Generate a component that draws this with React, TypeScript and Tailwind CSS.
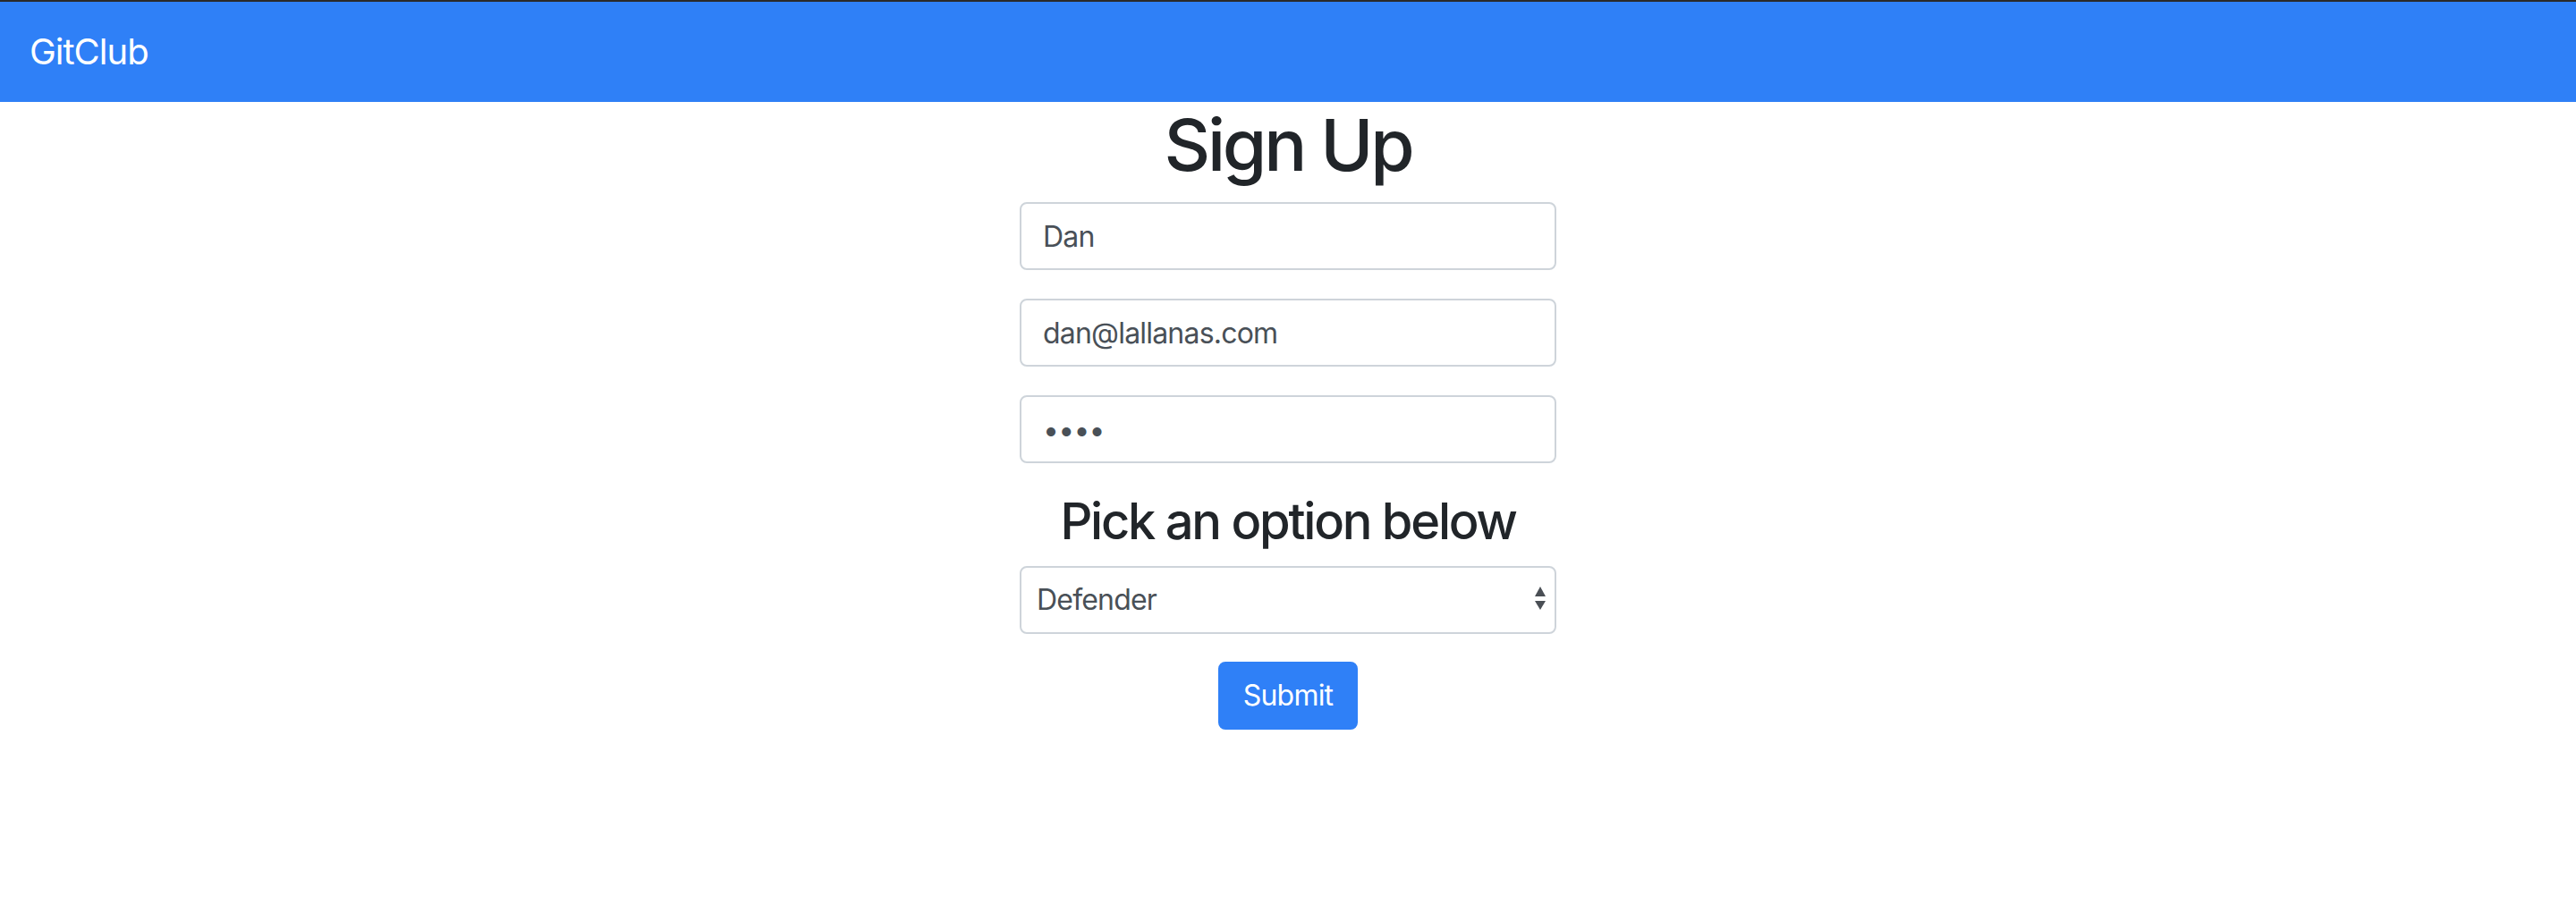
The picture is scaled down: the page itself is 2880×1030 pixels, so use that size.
import React from 'react'

const field =
  'block w-full h-[76px] rounded-[8px] border-2 border-[#ced4da] bg-white px-[24px] text-[32px] tracking-[-0.025em] text-[#495057] outline-none'

function App() {
  return (
    <div className="min-h-[1030px] bg-white font-['Inter',sans-serif] text-[#212529]">
      <nav className="flex h-[114px] items-center border-t-2 border-[#2a2a2a] bg-[#2f80f7] px-[33px]">
        <a href="#" className="text-[40px] leading-[60px] tracking-[-0.025em] text-white">
          GitClub
        </a>
      </nav>

      <div className="flex flex-col items-center">
        <h1 className="mb-[16px] text-[80px] font-medium leading-[96px] tracking-[-0.04em]">Sign Up</h1>

        <form className="w-[600px]" onSubmit={(e) => e.preventDefault()}>
          <div className="mb-[32px]">
            <input type="text" className={field} defaultValue="Dan" />
          </div>
          <div className="mb-[32px]">
            <input type="email" className={field} defaultValue="dan@lallanas.com" />
          </div>
          <div className="mb-[32px]">
            <input type="password" className={field} defaultValue="1234" />
          </div>

          <h3 className="mb-[16px] text-center text-[56px] font-medium leading-[67px] tracking-[-0.04em]">
            Pick an option below
          </h3>

          <div className="relative mb-[31px]">
            <select
              className="block h-[76px] w-full appearance-none rounded-[8px] border-2 border-[#ced4da] bg-white pl-[17px] pr-[48px] text-[32px] tracking-[-0.025em] text-[#495057] outline-none"
              defaultValue="Defender"
            >
              <option>Goalkeeper</option>
              <option>Defender</option>
              <option>Midfielder</option>
              <option>Forward</option>
            </select>
            <svg
              className="pointer-events-none absolute right-[12px] top-[23px]"
              width="12"
              height="27"
              viewBox="0 0 12 27"
            >
              <polygon points="6,0 12,11 0,11" fill="#4a4f55" />
              <polygon points="0,16 12,16 6,26" fill="#4a4f55" />
            </svg>
          </div>

          <div className="text-center">
            <button
              type="submit"
              className="h-[76px] w-[156px] rounded-[8px] border-2 border-[#2f80f7] bg-[#2f80f7] text-[32px] tracking-[-0.025em] text-white"
            >
              Submit
            </button>
          </div>
        </form>
      </div>
    </div>
  )
}

export default App
